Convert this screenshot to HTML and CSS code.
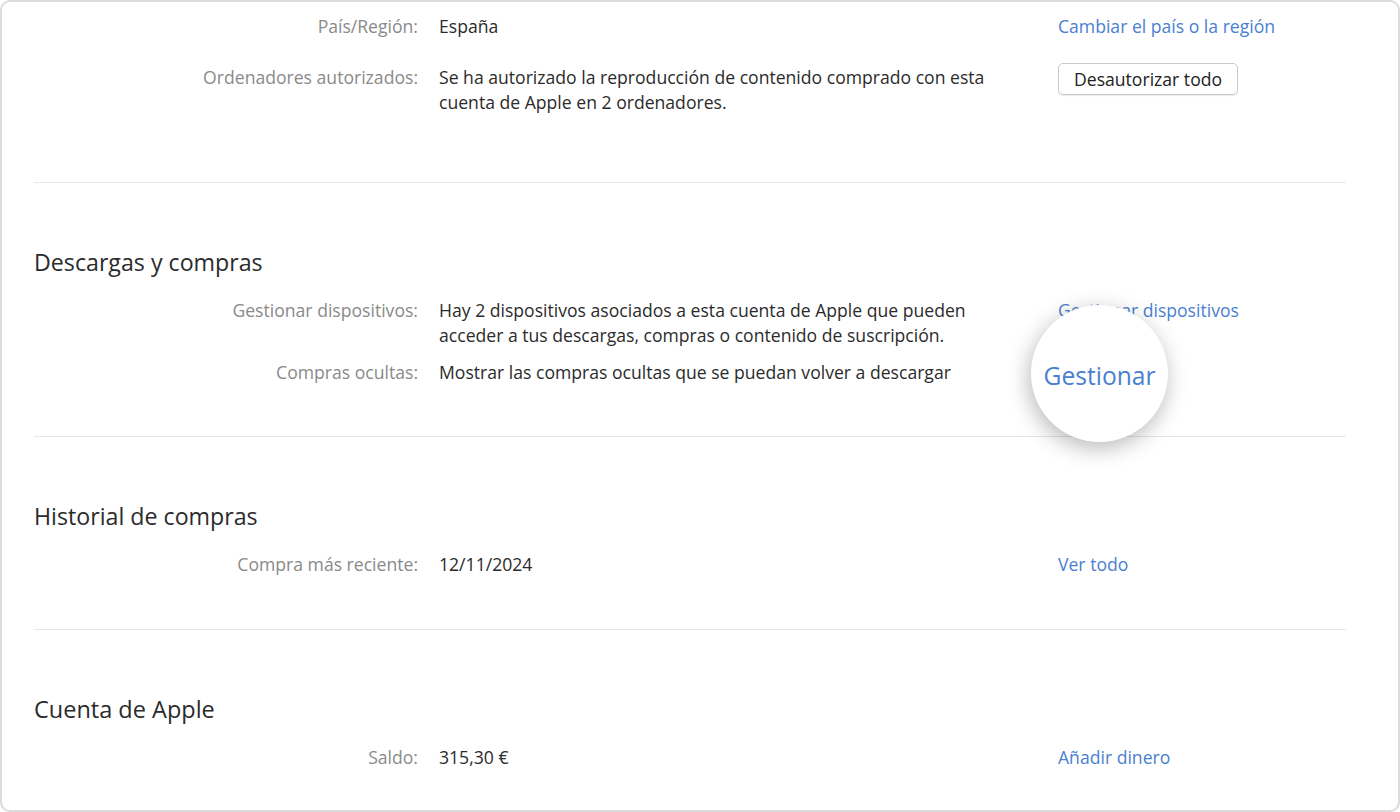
FILE: index.html
```html
<!DOCTYPE html>
<html lang="es">
<head>
<meta charset="utf-8">
<title>Cuenta</title>
<link rel="stylesheet" href="styles.css">
</head>
<body>
<div class="frame">
  <section class="section section-first">
    <div class="row row-loose">
      <div class="label">País/Región:</div>
      <div class="value">España</div>
      <div class="action"><a class="link">Cambiar el país o la región</a></div>
    </div>
    <div class="row row-loose">
      <div class="label">Ordenadores autorizados:</div>
      <div class="value">Se ha autorizado la reproducción de contenido comprado con esta<br>cuenta de Apple en 2 ordenadores.</div>
      <div class="action"><button class="btn">Desautorizar todo</button></div>
    </div>
  </section>

  <section class="section section-downloads">
    <h2 class="heading">Descargas y compras</h2>
    <div class="row">
      <div class="label">Gestionar dispositivos:</div>
      <div class="value">Hay 2 dispositivos asociados a esta cuenta de Apple que pueden<br>acceder a tus descargas, compras o contenido de suscripción.</div>
      <div class="action"><a class="link">Gestionar dispositivos</a></div>
    </div>
    <div class="row">
      <div class="label">Compras ocultas:</div>
      <div class="value">Mostrar las compras ocultas que se puedan volver a descargar</div>
      <div class="action action-zoom">
        <a class="link">Gestionar</a>
        <div class="magnifier"><span class="magnifier-text">Gestionar</span></div>
      </div>
    </div>
  </section>

  <section class="section">
    <h2 class="heading">Historial de compras</h2>
    <div class="row">
      <div class="label">Compra más reciente:</div>
      <div class="value">12/11/2024</div>
      <div class="action"><a class="link">Ver todo</a></div>
    </div>
  </section>

  <section class="section section-last">
    <h2 class="heading heading-apple">Cuenta de Apple</h2>
    <div class="row">
      <div class="label">Saldo:</div>
      <div class="value">315,30 €</div>
      <div class="action"><a class="link">Añadir dinero</a></div>
    </div>
  </section>
</div>
</body>
</html>
```

FILE: styles.css
```css
* { box-sizing: border-box; }

html, body {
  margin: 0;
  padding: 0;
  background: #ffffff;
}

body {
  font-family: "Open Sans", "Noto Sans", "Liberation Sans", sans-serif;
  font-size: 17.6px;
  line-height: 25px;
  color: #2b2b2b;
  width: 1400px;
  height: 812px;
  overflow: hidden;
}

.frame {
  width: 1400px;
  height: 812px;
  border: 2px solid #dcdcdc;
  border-radius: 10px;
  padding: 0 52px 0 32px;
  overflow: hidden;
}

.section {
  border-bottom: 1px solid #e6e6e6;
  padding: 63px 0 52px;
}

.section-first {
  padding: 11px 0 67px;
}

.section-downloads {
  padding-bottom: 51px;
}

.section-last {
  border-bottom: none;
}

.heading {
  margin: 0 0 19px;
  font-weight: 400;
  font-size: 23.2px;
  line-height: 32px;
  color: #2b2b2b;
}

.heading-apple {
  font-size: 23.5px;
}

.row {
  display: grid;
  grid-template-columns: 385px 599px 1fr;
  column-gap: 20px;
  padding-top: 1px;
  margin-bottom: 11px;
}

.row:last-child { margin-bottom: 0; }

.row-loose { margin-bottom: 25px; }

.label {
  text-align: right;
  color: #8a8a8a;
  padding-right: 1px;
}

.value {
  color: #2b2b2b;
}

.action {
  position: relative;
}

.link {
  color: #4a80d0;
  text-decoration: none;
  cursor: pointer;
}

.btn {
  font-family: inherit;
  font-size: 17.6px;
  line-height: 24px;
  color: #222;
  background: #fff;
  border: 1px solid #c9c9c9;
  border-radius: 5px;
  padding: 3px 15px;
  height: 32px;
  margin-top: -2px;
  box-shadow: 0 1px 1px rgba(0,0,0,0.08);
}

.magnifier {
  position: absolute;
  left: -27px;
  top: -55px;
  width: 137px;
  height: 137px;
  border-radius: 50%;
  background: #fff;
  box-shadow: -2px 6px 22px rgba(0,0,0,0.28);
  display: flex;
  align-items: center;
  justify-content: center;
}

.magnifier-text {
  color: #4a80d0;
  font-size: 24.6px;
  line-height: 32px;
  margin-top: 4px;
}
```
